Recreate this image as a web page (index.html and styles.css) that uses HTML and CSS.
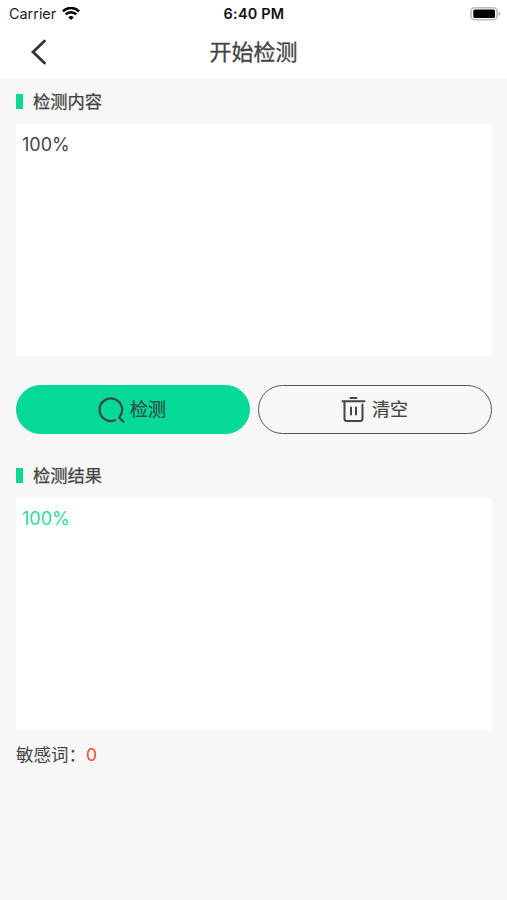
FILE: index.html
```html
<!DOCTYPE html>
<html lang="zh-CN">
<head>
<meta charset="utf-8">
<title>开始检测</title>
<link rel="stylesheet" href="styles.css">
</head>
<body>
<header class="top">
  <div class="status">
    <div class="carrier">
      <span>Carrier</span>
      <svg class="wifi" width="18" height="14" viewBox="0 0 18 14" fill="none" stroke="#000" stroke-width="2.5">
        <path d="M.9 4.3a11.5 11.5 0 0 1 16.2 0M3.7 7.4a7.5 7.5 0 0 1 10.6 0"/>
        <path d="M9 13.1 6.2 10.3a4 4 0 0 1 5.6 0Z" fill="#000" stroke="none"/>
      </svg>
    </div>
    <div class="time">6:40 PM</div>
    <svg class="battery" width="31" height="14" viewBox="0 0 31 14">
      <rect x="1" y=".8" width="26" height="12" rx="3.8" fill="#fff" stroke="#bbb" stroke-width="1.6"/>
      <rect x="3.3" y="2.6" width="21.7" height="8.4" rx="1.6" fill="#000"/>
      <path d="M28.6 4.7v4q1.7-.7 1.7-2t-1.7-2Z" fill="#aaa"/>
    </svg>
  </div>
  <nav class="nav">
    <svg class="back" width="18" height="26" viewBox="0 0 18 26" fill="none" stroke="#333" stroke-width="2.8" stroke-linecap="round"><path d="M14.5 2 3 13l11.5 11"/></svg>
    <h1 class="title">开始检测</h1>
  </nav>
</header>
<main class="page">
  <h2 class="heading"><span>检测内容</span></h2>
  <div class="panel">100%</div>
  <div class="actions">
    <button class="button primary">
      <svg width="28" height="28" viewBox="0 0 28 28" fill="none" stroke="#304b43" stroke-width="2.2" stroke-linecap="round"><path d="M17 24.3A11.3 11.3 0 1 1 21.2 21.4M21.2 21.4 25.4 25.7"/></svg>
      <span>检测</span>
    </button>
    <button class="button">
      <svg width="28" height="28" viewBox="0 0 28 28" fill="none" stroke="#444" stroke-width="2" stroke-linecap="round"><path d="M10.5 2h6M2.5 5.3h22M4.500 6v16.500q0 2.500 2.500 2.500h13q2.500 0 2.500-2.500V8.500M11 11.500v7M16 11.500v7"/></svg>
      <span>清空</span>
    </button>
  </div>
  <h2 class="heading"><span>检测结果</span></h2>
  <div class="panel result">100%</div>
  <p class="summary">敏感词：<span class="count">0</span></p>
</main>
</body>
</html>
```
FILE: styles.css
```css
* { box-sizing: border-box; }
body {
  margin: 0;
  min-height: 100vh;
  background: #f7f7f7;
  color: #444;
  font-family: Inter, "Noto Sans CJK SC", sans-serif;
}
.top { height: 79px; background: #fff; }
.status {
  display: grid;
  grid-template-columns: 1fr auto 1fr;
  align-items: center;
  height: 27px;
  padding: 0 6px 0 9px;
  color: #222;
  font-size: 14.4px;
}
.carrier { display: flex; align-items: center; gap: 6px; }
.time { margin-left: -2px; color: #111; font-weight: 600; letter-spacing: .25px; }
.battery { justify-self: end; }
.nav {
  display: grid;
  grid-template-columns: 1fr auto 1fr;
  align-items: center;
  height: 50px;
  padding: 0 30px;
}
.title {
  margin: 0;
  font-size: 22px;
  font-weight: 400;
  line-height: 32px;
  -webkit-text-stroke: .3px;
}
.page { padding: 0 15px 0 16px; }
.heading {
  display: flex;
  align-items: center;
  gap: 10px;
  height: 45px;
  margin: 0;
  font-size: 17.3px;
  font-weight: 400;
  -webkit-text-stroke: .25px;
}
.heading span { padding-bottom: 2px; }
.heading::before {
  content: "";
  width: 7px;
  height: 15px;
  background: #0bd993;
}
.panel {
  height: 232px;
  padding: 8px 6px;
  background: #fff;
  font-size: 18px;
  line-height: 25px;
}
.result { height: 231px; color: #2bdc9c; }
.actions {
  display: grid;
  grid-template-columns: 1fr 1fr;
  gap: 8px;
  margin: 28.5px 0 19.5px;
}
.button {
  display: flex;
  align-items: center;
  justify-content: center;
  gap: 4px;
  height: 49px;
  padding: 1px 2px 0 0;
  border: 1.5px solid #555;
  border-radius: 25px;
  background: transparent;
  color: #444;
  font: 400 18px/26px Inter, "Noto Sans CJK SC", sans-serif;
  -webkit-text-stroke: .2px;
}
.button span { padding-top: 1px; }
.primary { border-color: #04d997; background: #04d997; color: #304b43; }
.summary { margin: 13px 0 0; font-size: 17.5px; line-height: 26px; }
.count { color: #f04a2c; }
```
